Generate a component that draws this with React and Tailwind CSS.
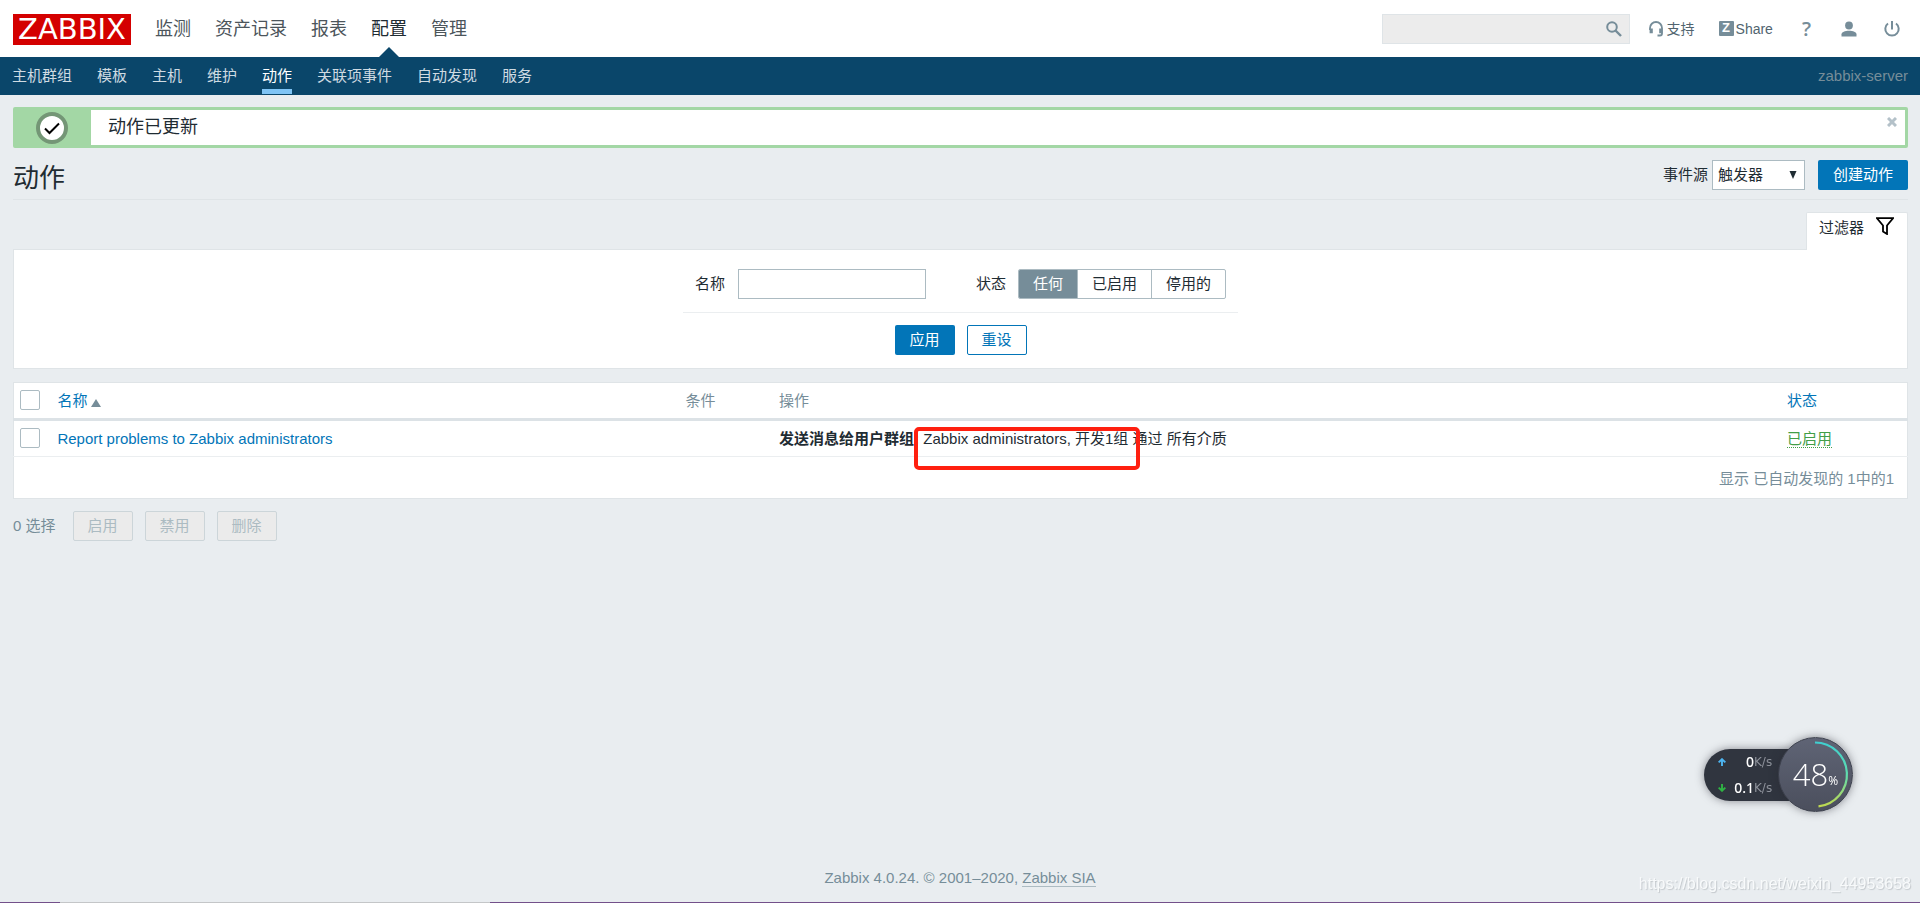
import { useState } from 'react';

const mainMenu = ['监测', '资产记录', '报表', '配置', '管理'];
const subMenu = ['主机群组', '模板', '主机', '维护', '动作', '关联项事件', '自动发现', '服务'];
const statuses = ['任何', '已启用', '停用的'];

const SearchIcon = () => (
  <svg viewBox="0 0 16 16" className="h-4 w-4" fill="none" stroke="#768d99">
    <circle cx="6" cy="6" r="4.8" strokeWidth="2" />
    <path d="M9.500 9.500l5.500 5.500" strokeWidth="2.4" />
  </svg>
);

const SupportIcon = () => (
  <svg viewBox="0 0 16 16" className="h-4 w-4" fill="none" stroke="#768d99">
    <path d="M2 9V7a5.800 5.800 0 0 1 12 0v5.500q0 2-2 2H9.500" strokeWidth="1.8" />
    <path d="M3.200 7.500v4.800M12.800 7.500v4.800" strokeWidth="3.2" />
  </svg>
);

const UserIcon = () => (
  <svg viewBox="0 0 16 16" className="h-4 w-4" fill="#768d99">
    <circle cx="8" cy="4.5" r="3.9" />
    <path d="M.5 15.500v-2.200C.5 11 4 9.800 8 9.800s7.500 1.200 7.500 3.500v2.200z" />
  </svg>
);

const PowerIcon = () => (
  <svg viewBox="0 0 16 16" className="h-4 w-4" fill="none" stroke="#768d99" strokeWidth="2">
    <path d="M8 0V8.500M4 2.500a6.700 6.700 0 1 0 8 0" />
  </svg>
);

const FilterIcon = () => (
  <svg viewBox="0 0 18 18" className="h-[18px] w-[18px]" fill="none" stroke="#000" strokeWidth="1.8">
    <path d="M1 1.200h16L11 8.500V17l-4-2.500v-6z" />
  </svg>
);

const Header = () => (
  <header>
    <div className="flex h-[57px] items-center bg-white px-3">
      <a href="#home" className="mt-[2px] ml-px flex h-[31px] w-[118px] items-center justify-center bg-[#d40000] font-['DejaVu_Sans'] text-[29px] leading-none text-white">
        ZABBIX
      </a>
      <nav className="ml-6 flex h-full gap-6 text-[18px]">
        {mainMenu.map(item => (
          <a
            key={item}
            href="#menu"
            className={`relative flex items-center ${item === '配置' ? 'text-[#1f2c33]' : 'text-[#4c555b]'}`}
          >
            {item}
            {item === '配置' && (
              <span className="absolute bottom-0 left-1/2 -translate-x-1/2 border-x-[10px] border-b-[10px] border-x-transparent border-b-[#0a466a]" />
            )}
          </a>
        ))}
      </nav>
      <div className="ml-auto flex items-center text-sm text-[#51646f]">
        <form className="mr-[18px] flex h-[30px] w-[248px] items-center border border-[#dfe4e7] bg-[#ececec] pr-[7px]">
          <input type="text" aria-label="搜索" className="h-full min-w-0 flex-1 px-1 outline-none" />
          <button type="button" aria-label="搜索"><SearchIcon /></button>
        </form>
        <a href="#support" className="flex items-center gap-[3px]"><SupportIcon />支持</a>
        <a href="#share" className="ml-6 flex items-center gap-[2px]">
          <span className="flex h-[15px] w-[15px] items-center justify-center rounded-[1px] bg-[#768d99] text-[13px] font-bold text-white">Z</span>
          Share
        </a>
        <a href="#help" className="ml-[29px] font-['Open_Sans'] text-[20px] leading-none font-semibold text-[#768d99]">?</a>
        <a href="#profile" aria-label="用户" className="ml-[30px]"><UserIcon /></a>
        <a href="#logout" aria-label="退出" className="mr-2 ml-[27px]"><PowerIcon /></a>
      </div>
    </div>
    <div className="flex h-[38px] items-stretch bg-[#0a466a] px-3 text-[15px]">
      <nav className="flex gap-[25px]">
        {subMenu.map(item => (
          <a
            key={item}
            href="#submenu"
            className={`mb-px flex items-center border-b-[5px] pt-[6px] ${item === '动作' ? 'border-[#7fc4f5] text-white' : 'border-transparent text-[#cfdbe2]'}`}
          >
            {item}
          </a>
        ))}
      </nav>
      <span className="ml-auto self-center text-[#768d99]">zabbix-server</span>
    </div>
  </header>
);

const Message = () => (
  <div className="flex h-[41px] rounded-[2px] border-[3px] border-[#a3d7a5] bg-white">
    <div className="flex w-[75px] items-center justify-center bg-[#a3d7a5] pr-1">
      <svg viewBox="0 0 32 32" className="h-8 w-8">
        <circle cx="16" cy="16" r="14" fill="#fff" stroke="#749676" strokeWidth="4" />
        <path d="M9 16.500l4.500 4.500L23 11.500" fill="none" stroke="#000" strokeWidth="2" />
      </svg>
    </div>
    <p className="ml-[17px] self-center pb-[2px] text-[18px] leading-none">动作已更新</p>
    <button type="button" aria-label="关闭" className="mt-[7px] mr-2 ml-auto self-start">
      <svg viewBox="0 0 10 10" className="h-[10px] w-[10px]" stroke="#b4c1c9" strokeWidth="3">
        <path d="M1 1l8 8M9 1l-8 8" />
      </svg>
    </button>
  </div>
);

const Filter = () => {
  const [status, setStatus] = useState('任何');

  return (
    <section className="mt-3">
      <div className="flex justify-end">
        <button type="button" className="relative z-10 -mb-px flex h-[38px] items-start gap-3 rounded-t-[2px] border border-b-0 border-[#dfe4e7] bg-white pt-1 pr-[13px] pl-3">
          过滤器<FilterIcon />
        </button>
      </div>
      <form className="flex flex-col items-center border border-[#dfe4e7] bg-white pt-[19px] pb-[13px]">
        <div className="flex items-center border-b border-[#ebeef0] px-3 pb-[13px]">
          <label htmlFor="name">名称</label>
          <input id="name" type="text" className="ml-[13px] h-[30px] w-[188px] border border-[#acbbc2] px-1" />
          <fieldset className="ml-[50px] flex items-center">
            <legend className="float-left mr-3">状态</legend>
            <div className="flex h-[30px] divide-x divide-[#acbbc2] overflow-hidden rounded-[2px] border border-[#acbbc2]">
              {statuses.map(item => (
                <label
                  key={item}
                  className={`flex items-center px-[14px] ${item === status ? 'bg-[#768d99] text-white' : ''}`}
                >
                  <input
                    type="radio"
                    name="status"
                    className="sr-only"
                    checked={item === status}
                    onChange={() => setStatus(item)}
                  />
                  {item}
                </label>
              ))}
            </div>
          </fieldset>
        </div>
        <div className="mt-3 flex gap-3">
          <button type="button" className="h-[30px] w-[60px] rounded-[2px] bg-[#0275b8] text-white">应用</button>
          <button type="button" className="h-[30px] w-[60px] rounded-[2px] border border-[#0275b8] text-[#0275b8]">重设</button>
        </div>
      </form>
    </section>
  );
};

const Check = ({ label }) => (
  <input
    type="checkbox"
    aria-label={label}
    className="block h-5 w-5 appearance-none rounded-[2px] border border-[#acbbc2] bg-white checked:bg-[#0275b8]"
  />
);

const ActionTable = () => (
  <table className="mt-[13px] w-full table-fixed border border-[#dfe4e7] bg-white text-left">
    <colgroup>
      <col className="w-[2%]" />
      <col className="w-[33%]" />
      <col className="w-[5%]" />
      <col />
      <col className="w-[7%]" />
    </colgroup>
    <thead>
      <tr className="h-[37px] border-b-[3px] border-[#dce2e6] text-[#768d99]">
        <th className="pb-[2px] pl-[6px]"><Check label="全选" /></th>
        <th className="pl-[6px] font-normal">
          <a href="#sort" className="inline-flex items-center gap-1 text-[#0275b8]">
            名称
            <svg viewBox="0 0 10 8" className="mt-1 h-2 w-[10px]" fill="#768d99"><path d="M5 0l5 8H0z" /></svg>
          </a>
        </th>
        <th className="pl-[9px] font-normal">条件</th>
        <th className="pl-2 font-normal">操作</th>
        <th className="pl-3 font-normal"><a href="#sort" className="text-[#0275b8]">状态</a></th>
      </tr>
    </thead>
    <tbody>
      <tr className="h-[37px] border-b border-[#ebeef0]">
        <td className="pb-[2px] pl-[6px]"><Check label="Report problems to Zabbix administrators" /></td>
        <td className="pl-[6px]"><a href="#action" className="text-[#0275b8]">Report problems to Zabbix administrators</a></td>
        <td />
        <td className="relative pl-2">
          <b>发送消息给用户群组:</b> Zabbix administrators, 开发1组 通过 所有介质
          <span className="absolute top-[6px] left-[143px] h-[43px] w-[226px] rounded-[5px] border-4 border-[#ff2010]" />
        </td>
        <td className="pl-3"><a href="#status" className="border-b border-dotted border-[#429e47] text-[#429e47]">已启用</a></td>
      </tr>
      <tr className="h-[42px]">
        <td colSpan={5} className="pt-[2px] pr-[13px] text-right text-[#768d99]">显示 已自动发现的 1中的1</td>
      </tr>
    </tbody>
  </table>
);

const SpeedRow = ({ value, color, path }) => (
  <div className="flex h-[26px] items-center pl-[14px]">
    <svg viewBox="0 0 10 10" className="h-2 w-2" fill="none" stroke={color} strokeWidth="2.4">
      <path d={path} />
    </svg>
    <span className="w-7 text-right text-[14px] font-medium text-white">{value}</span>
    <span className="font-['DejaVu_Sans'] text-xs text-[#8e929b]">K/s</span>
  </div>
);

const SpeedWidget = () => (
  <div className="fixed right-[67px] bottom-[91px] flex items-center">
    <div className="-mr-[11px] h-[52px] w-[85px] rounded-l-full bg-[#30353f] font-['Noto_Sans'] leading-none shadow-[0_0_8px_rgba(40,40,50,0.5)]">
      <SpeedRow value="0" color="#4db4f0" path="M5 10V1.500M0.800 5.500L5 1.500l4.200 4" />
      <SpeedRow value="0.1" color="#2fb344" path="M5 0v8.500M0.800 4.500L5 8.500l4.200-4" />
    </div>
    <div className="relative flex h-[75px] w-[75px] items-center justify-center rounded-full border border-[#3c404c] bg-linear-to-b from-[#5f6475] to-[#4b4f5d] shadow-[0_0_8px_rgba(40,40,50,0.5)]">
      <svg viewBox="0 0 75 75" className="absolute -inset-px h-[75px] w-[75px]" fill="none">
        <defs>
          <linearGradient id="load" x1="0" y1="0" x2="0" y2="1">
            <stop offset="0" stopColor="#3fcfd0" />
            <stop offset="0.5" stopColor="#5fdcae" />
            <stop offset="1" stopColor="#bfd850" />
          </linearGradient>
        </defs>
        <path d="M37 5.500a32 32 0 0 1 3.500 63.800" stroke="url(#load)" strokeWidth="2.2" />
      </svg>
      <span className="font-['Open_Sans'] text-[31px] leading-none font-light text-white">48</span>
      <span className="pt-3 font-['Open_Sans'] text-xs leading-none text-white">%</span>
    </div>
  </div>
);

const App = () => (
  <div className="flex min-h-screen flex-col bg-[#e9edf0] font-['Liberation_Sans','Noto_Sans_CJK_SC',sans-serif] text-[15px] leading-[22px] text-[#1f2c33]">
    <Header />
    <main className="flex-1 pt-3 pr-3 pl-[13px]">
      <Message />
      <div className="mt-3 flex h-[40px] items-start border-b border-[#dfe4e7]">
        <h1 className="text-[26px] leading-[36px]">动作</h1>
        <div className="ml-auto flex items-center">
          <label htmlFor="source">事件源</label>
          <div className="relative ml-1">
            <select id="source" className="block h-[30px] w-[93px] appearance-none border border-[#acbbc2] bg-white pl-[5px]">
              <option>触发器</option>
            </select>
            <svg viewBox="0 0 8 8" className="pointer-events-none absolute top-[11px] right-2 h-2 w-2" fill="#1f2c33">
              <path d="M.5 0h7L4 8z" />
            </svg>
          </div>
          <button type="button" className="ml-[13px] h-[30px] rounded-[2px] bg-[#0275b8] px-[15px] text-white">创建动作</button>
        </div>
      </div>
      <Filter />
      <ActionTable />
      <div className="mt-3 flex items-center text-[#768d99]">
        <span className="mr-[17px]">0 选择</span>
        <div className="flex gap-3">
          {['启用', '禁用', '删除'].map(item => (
            <button key={item} type="button" disabled className="h-[30px] w-[60px] rounded-[2px] border border-[#ccd5d9] bg-[#ebebeb] text-[#acbbc2]">{item}</button>
          ))}
        </div>
      </div>
    </main>
    <footer className="pb-[13px] text-center text-[#768d99]">
      Zabbix 4.0.24. © 2001–2020, <a href="#sia" className="border-b border-[#acbbc2]">Zabbix SIA</a>
    </footer>
    <div className="flex h-px bg-[#73508a]">
      <span className="ml-[60px] w-[430px] bg-[#c4c6c8]" />
    </div>
    <p className="fixed right-[9px] bottom-2 text-[16px] text-[#f8fafb] [text-shadow:1px_1px_1px_#c3c8cc]">
      https://blog.csdn.net/weixin_44953658
    </p>
    <SpeedWidget />
  </div>
);

export default App;
